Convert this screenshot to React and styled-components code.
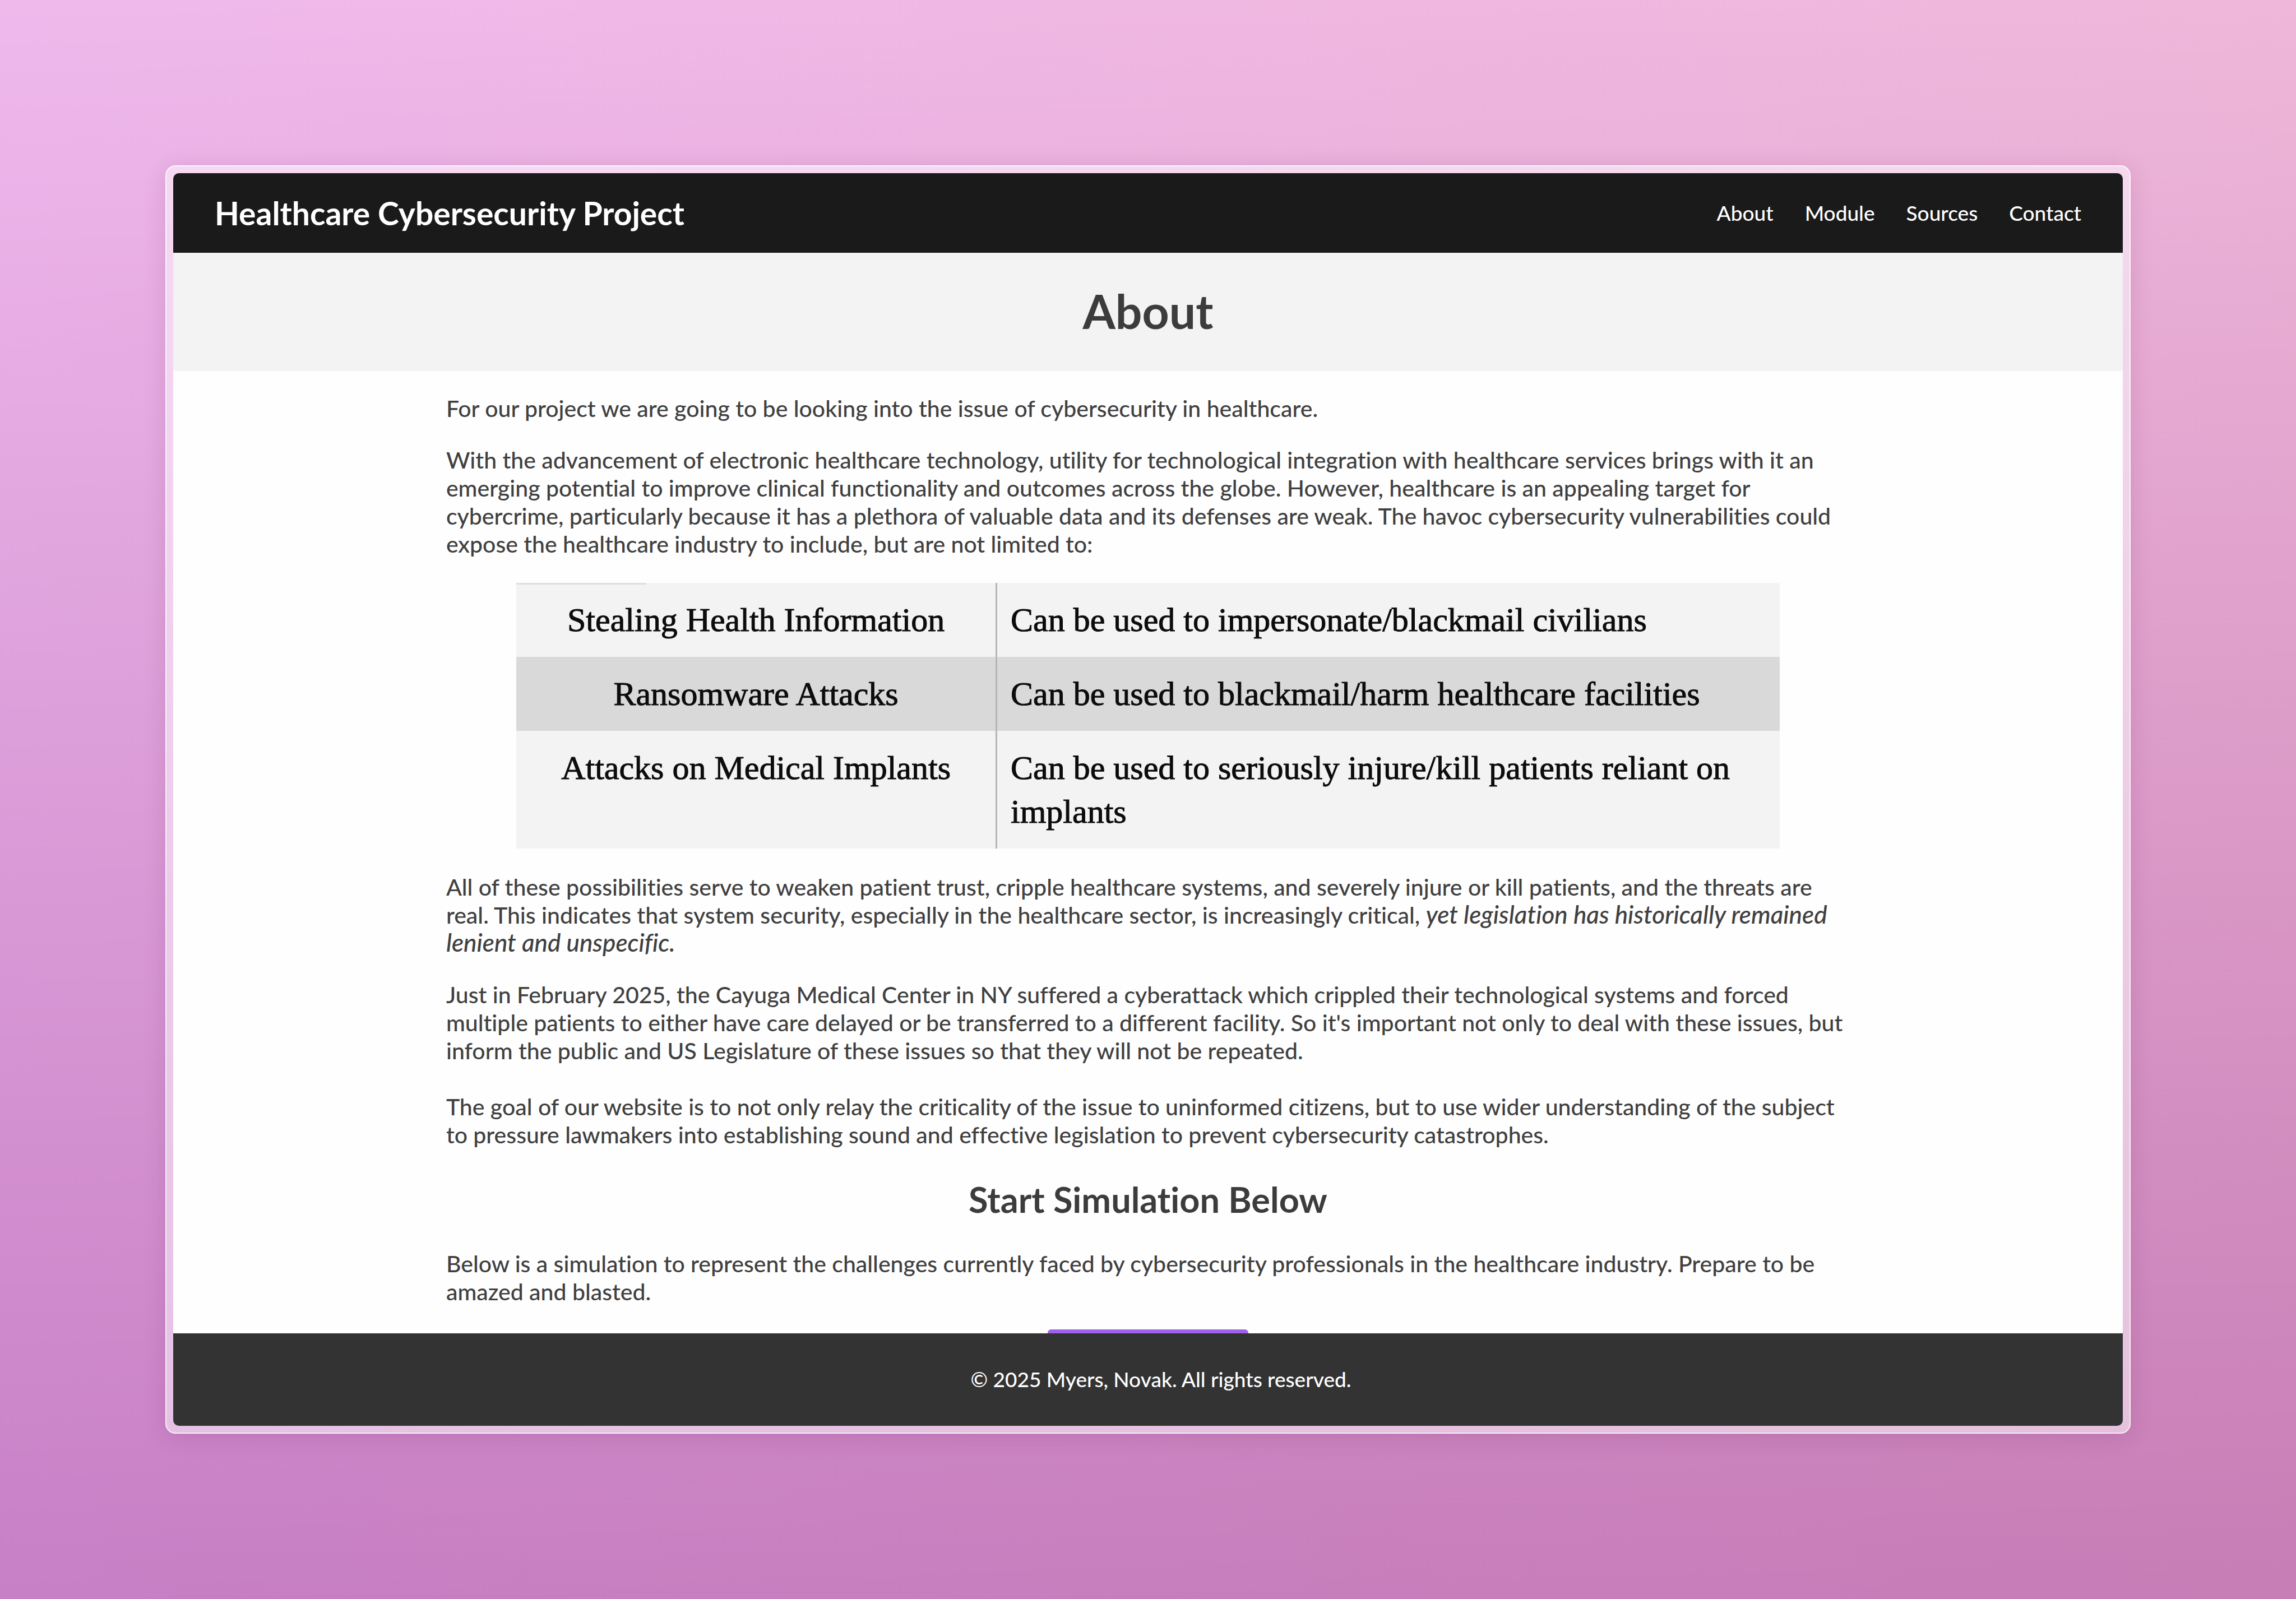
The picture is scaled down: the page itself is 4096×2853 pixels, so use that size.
import React from "react";
import styled, { createGlobalStyle } from "styled-components";

const GlobalStyle = createGlobalStyle`
  *, *::before, *::after { box-sizing: border-box; }
  body { margin: 0; }
`;

const Stage = styled.div`
  display: flex;
  height: 100vh;
  padding: 295px;
  font-family: Lato, "Open Sans", sans-serif;
  font-size: 41px;
  font-weight: 500;
  line-height: 50px;
  font-variant-ligatures: none;
  color: #404040;
  background-image:
    linear-gradient(178deg, #ffffff 0%, #d2abd3 100%),
    linear-gradient(to right, #efb9ec, #f1badb);
  background-blend-mode: multiply;
`;

const Frame = styled.div`
  flex: 1;
  display: flex;
  min-width: 0;
  padding: 12px;
  border: 2px solid rgba(255, 255, 255, 0.7);
  border-radius: 18px;
  background: rgba(255, 255, 255, 0.5);
  background-clip: border-box;
  box-shadow: 0 6px 40px rgba(90, 20, 80, 0.14);
`;

const Screen = styled.div`
  flex: 1;
  display: flex;
  flex-direction: column;
  min-width: 0;
  overflow: hidden;
  border-radius: 10px;
  background: #fefefe;
`;

const Header = styled.header`
  flex: none;
  display: flex;
  align-items: center;
  justify-content: space-between;
  height: 142px;
  padding: 0 74px;
  background: #1a1a1a;
  color: #ffffff;
`;

const Brand = styled.div`
  font-size: 57px;
  line-height: 70px;
  font-weight: 700;
`;

const Nav = styled.nav`
  display: flex;
  gap: 56px;
`;

const NavLink = styled.a`
  font-size: 37px;
  color: inherit;
  text-decoration: none;
`;

const Hero = styled.section`
  flex: none;
  padding: 53px 0 57px;
  background: #f3f3f3;
  text-align: center;
`;

const PageTitle = styled.h1`
  margin: 0;
  font-size: 84px;
  line-height: 101px;
  font-weight: 700;
  color: #3c3c3c;
`;

const Main = styled.main`
  flex: 1;
  min-height: 0;
  padding: 42px 14% 0;
  overflow-y: auto;
  scrollbar-width: none;
`;

const Paragraph = styled.p`
  margin: 0 0 42px;
`;

const Stress = styled.em`
  font-size: 44px;
  line-height: 1;
`;

const Risks = styled.table`
  width: 90%;
  margin: 44px auto;
  border-collapse: collapse;
  table-layout: fixed;
  font-family: "Liberation Serif", serif;
  font-size: 60px;
  line-height: 78px;
  color: #0c0c0c;
  -webkit-text-stroke: 1px #0c0c0c;
  background:
    linear-gradient(#e2dbe0, #e2dbe0) 0 0 / 232px 3px no-repeat,
    #f3f3f3;
`;

const RiskRow = styled.tr`
  background: ${(p) => (p.$shaded ? "#d9d9d9" : "transparent")};
`;

const RiskName = styled.th`
  width: 38%;
  padding: 27px 24px;
  border-right: 3px solid #b6b6b6;
  font-weight: 400;
  text-align: center;
  vertical-align: top;
`;

const RiskEffect = styled.td`
  padding: 27px 24px;
  font-weight: 400;
  vertical-align: top;
`;

const SectionTitle = styled.h2`
  margin: 52px 0;
  font-size: 63px;
  line-height: 76px;
  font-weight: 700;
  color: #3c3c3c;
  text-align: center;
`;

const StartButton = styled.button`
  display: block;
  width: 358px;
  height: 120px;
  margin: 0 auto;
  border: 0;
  border-radius: 6px;
  background: #9f62ea;
`;

const Footer = styled.footer`
  flex: none;
  padding: 57px 0 58px 46px;
  background: #333333;
  color: #ffffff;
  font-size: 37px;
  text-align: center;
`;

const links = ["About", "Module", "Sources", "Contact"];

const risks = [
  ["Stealing Health Information", "Can be used to impersonate/blackmail civilians"],
  ["Ransomware Attacks", "Can be used to blackmail/harm healthcare facilities"],
  ["Attacks on Medical Implants", "Can be used to seriously injure/kill patients reliant on implants"],
];

export default function App() {
  return (
    <>
      <GlobalStyle />
      <Stage>
        <Frame>
          <Screen>
            <Header>
              <Brand>Healthcare Cybersecurity Project</Brand>
              <Nav>
                {links.map((label) => (
                  <NavLink key={label} href={`#${label.toLowerCase()}`}>
                    {label}
                  </NavLink>
                ))}
              </Nav>
            </Header>
            <Hero>
              <PageTitle>About</PageTitle>
            </Hero>
            <Main>
              <Paragraph>
                For our project we are going to be looking into the issue of cybersecurity in healthcare.
              </Paragraph>
              <Paragraph>
                With the advancement of electronic healthcare technology, utility for technological
                integration with healthcare services brings with it an emerging potential to improve
                clinical functionality and outcomes across the globe. However, healthcare is an appealing
                target for cybercrime, particularly because it has a plethora of valuable data and its
                defenses are weak. The havoc cybersecurity vulnerabilities could expose the healthcare
                industry to include, but are not limited to:
              </Paragraph>
              <Risks>
                <tbody>
                  {risks.map(([name, effect], i) => (
                    <RiskRow key={name} $shaded={i % 2 === 1}>
                      <RiskName scope="row">{name}</RiskName>
                      <RiskEffect>{effect}</RiskEffect>
                    </RiskRow>
                  ))}
                </tbody>
              </Risks>
              <Paragraph>
                All of these possibilities serve to weaken patient trust, cripple healthcare systems, and
                severely injure or kill patients, and the threats are real. This indicates that system
                security, especially in the healthcare sector, is increasingly critical,{" "}
                <Stress>yet legislation has historically remained lenient and unspecific.</Stress>
              </Paragraph>
              <Paragraph>
                Just in February 2025, the Cayuga Medical Center in NY suffered a cyberattack which
                crippled their technological systems and forced multiple patients to either have care
                delayed or be transferred to a different facility. So it's important not only to deal with
                these issues, but inform the public and US Legislature of these issues so that they will
                not be repeated.
                <br />
                <br />
                The goal of our website is to not only relay the criticality of the issue to uninformed
                citizens, but to use wider understanding of the subject to pressure lawmakers into
                establishing sound and effective legislation to prevent cybersecurity catastrophes.
              </Paragraph>
              <SectionTitle>Start Simulation Below</SectionTitle>
              <Paragraph>
                Below is a simulation to represent the challenges currently faced by cybersecurity
                professionals in the healthcare industry. Prepare to be amazed and blasted.
              </Paragraph>
              <StartButton type="button" aria-label="Start simulation" />
            </Main>
            <Footer>© 2025 Myers, Novak. All rights reserved.</Footer>
          </Screen>
        </Frame>
      </Stage>
    </>
  );
}
